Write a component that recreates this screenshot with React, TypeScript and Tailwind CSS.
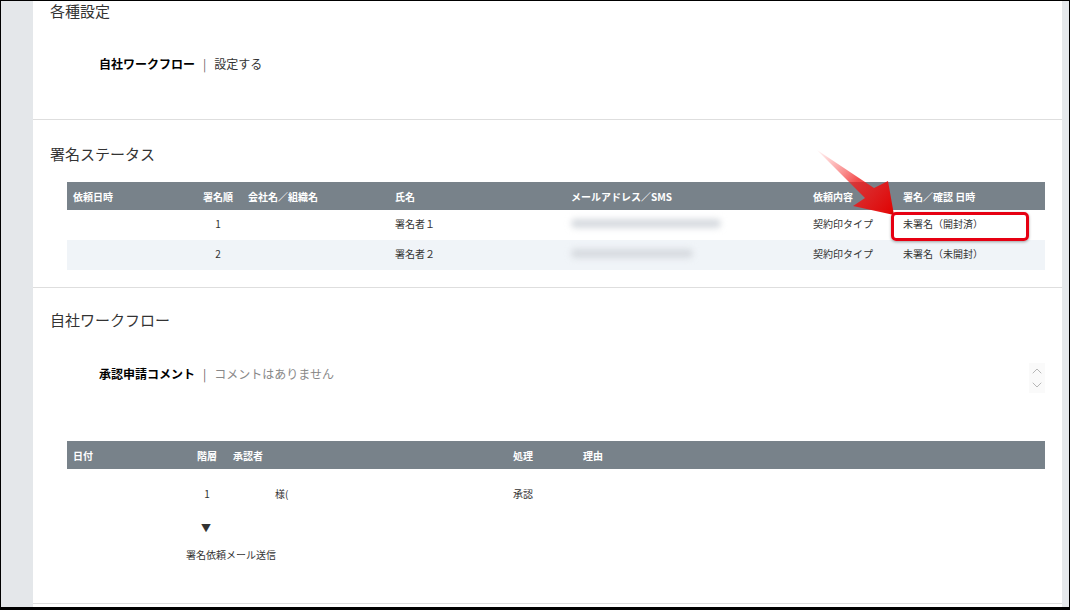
import { ChevronDown, ChevronUp } from "lucide-react";

const font = { fontFamily: '"Noto Sans CJK JP", "Noto Sans", sans-serif' };

const signRows = [
  { order: "1", name: "署名者１", mail: "w-[150px]", kind: "契約印タイプ", status: "未署名（開封済）", alt: false },
  { order: "2", name: "署名者２", mail: "w-[122px]", kind: "契約印タイプ", status: "未署名（未開封）", alt: true },
];

function SectionTitle({ children }: { children: React.ReactNode }) {
  return <h2 className="text-[15px] leading-[20px] text-[#333]">{children}</h2>;
}

function HeaderCell({ children, center }: { children?: React.ReactNode; center?: boolean }) {
  return (
    <div className={`flex items-center text-[10px] font-bold text-white ${center ? "justify-center" : "pl-[6px]"}`}>
      {children}
    </div>
  );
}

function Cell({ children, center, className = "" }: { children?: React.ReactNode; center?: boolean; className?: string }) {
  return (
    <div className={`flex items-center text-[10px] text-[#333] ${center ? "justify-center" : "pl-[6px]"} ${className}`}>
      {children}
    </div>
  );
}

export default function App() {
  return (
    <div
      className="relative flex h-[610px] w-[1070px] overflow-hidden border-x border-t border-b-[3px] border-black bg-[#e5e8eb]"
      style={font}
    >
      <div className="w-[32px] shrink-0 bg-[#e4e7ea]" />

      <main className="flex w-[1029px] flex-col bg-white">
        {/* 各種設定 */}
        <section className="h-[119px] border-b border-[#dedede] pl-[17px]">
          <SectionTitle>各種設定</SectionTitle>
          <div className="mt-[33px] flex items-center pl-[49px] text-[12px] leading-[20px]">
            <span className="font-bold text-black">自社ワークフロー</span>
            <span className="mx-[8px] text-[#666]">|</span>
            <span className="text-[#333]">設定する</span>
          </div>
        </section>

        {/* 署名ステータス */}
        <section className="border-b border-[#dedede] pb-[17px] pl-[17px] pr-[17px] pt-[24px]">
          <SectionTitle>署名ステータス</SectionTitle>
          <div className="ml-[17px] mt-[18px]">
            <div className="grid h-[28px] grid-cols-[129px_44px_149px_176px_242px_90px_1fr] bg-[#78828a]">
              <HeaderCell>依頼日時</HeaderCell>
              <HeaderCell center>署名順</HeaderCell>
              <HeaderCell>
                <span className="pl-[2px]">会社名／組織名</span>
              </HeaderCell>
              <HeaderCell>氏名</HeaderCell>
              <HeaderCell>メールアドレス／SMS</HeaderCell>
              <HeaderCell>依頼内容</HeaderCell>
              <HeaderCell>署名／確認 日時</HeaderCell>
            </div>
            {signRows.map((r) => (
              <div
                key={r.order}
                className={`grid h-[30px] grid-cols-[129px_44px_149px_176px_242px_90px_1fr] pb-[3px] ${r.alt ? "bg-[#f0f4f8]" : "bg-white"}`}
              >
                <Cell />
                <Cell center>{r.order}</Cell>
                <Cell />
                <Cell>{r.name}</Cell>
                <Cell className="pl-[2px]">
                  <span className={`h-[9px] ${r.mail} rounded-full bg-[#d6dadf] blur-[3px]`} />
                </Cell>
                <Cell>{r.kind}</Cell>
                <Cell className="pl-[4px]">{r.status}</Cell>
              </div>
            ))}
          </div>
        </section>

        {/* 自社ワークフロー */}
        <section className="flex-1 border-b border-[#dedede] pl-[17px] pr-[17px] pt-[22px]">
          <SectionTitle>自社ワークフロー</SectionTitle>
          <div className="ml-[17px] mt-[33px] flex items-start">
            <div className="flex items-center pl-[32px] pt-[1px] text-[12px] leading-[20px]">
              <span className="font-bold text-black">承認申請コメント</span>
              <span className="mx-[8px] text-[#666]">|</span>
              <span className="text-[#888]">コメントはありません</span>
            </div>
            <div className="ml-auto flex flex-col items-center bg-[#fafafa] text-[#aaa]">
              <ChevronUp size={16} strokeWidth={1.25} />
              <ChevronDown size={16} strokeWidth={1.25} className="-mt-[2px]" />
            </div>
          </div>

          <div className="ml-[17px] mt-[48px]">
            <div className="grid h-[28px] grid-cols-[120px_40px_280px_70px_1fr] bg-[#78828a]">
              <HeaderCell>日付</HeaderCell>
              <HeaderCell center>階層</HeaderCell>
              <HeaderCell>承認者</HeaderCell>
              <HeaderCell>処理</HeaderCell>
              <HeaderCell>理由</HeaderCell>
            </div>
            <div className="grid h-[50px] grid-cols-[120px_40px_280px_70px_1fr] pb-[2px]">
              <Cell />
              <Cell center>1</Cell>
              <Cell className="pl-[48px]">様(</Cell>
              <Cell>承認</Cell>
              <Cell />
            </div>
            <div className="mt-[2px] flex w-[280px] flex-col">
              <span className="pl-[134px] text-[10px] leading-[14px] text-[#333]">▼</span>
              <span className="mt-[13px] pl-[119px] text-[10px] leading-[14px] text-[#333]">署名依頼メール送信</span>
            </div>
          </div>
        </section>
        <div className="h-[3px]" />
      </main>

      <div className="flex-1 bg-[#e5e8eb]" />

      {/* annotation: arrow and highlight box */}
      <svg className="pointer-events-none absolute left-0 top-0" width="1070" height="610">
        <defs>
          <linearGradient id="arrowGrad" x1="817" y1="149" x2="893" y2="214" gradientUnits="userSpaceOnUse">
            <stop offset="0" stopColor="#ff7070" stopOpacity="0.1" />
            <stop offset="0.5" stopColor="#f02020" stopOpacity="0.8" />
            <stop offset="1" stopColor="#e00000" />
          </linearGradient>
        </defs>
        <polygon
          points="816,149 873,187 887,180 893,214 852,205 864,197"
          fill="url(#arrowGrad)"
        />
      </svg>
      <div className="pointer-events-none absolute left-[890px] top-[211px] h-[29px] w-[138px] rounded-[5px] border-[3px] border-[#e60012] shadow-[0_1px_3px_rgba(0,0,0,0.35)]" />
    </div>
  );
}
